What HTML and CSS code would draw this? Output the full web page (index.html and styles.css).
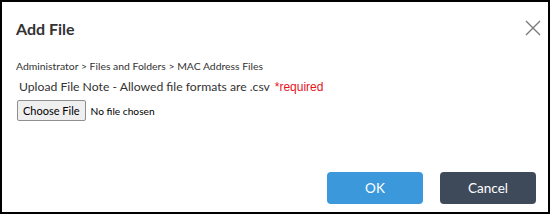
FILE: index.html
```html
<!DOCTYPE html>
<html lang="en">
<head>
  <meta charset="UTF-8">
  <title>Add File</title>
<link rel="stylesheet" href="styles.css">
</head>
<body>
<div class="modal">
  <header class="modal-header">
    <h2>Add File</h2>
    <button class="close" aria-label="Close">
      <svg width="16" height="16" viewBox="0 0 16 16"><path d="M1 1L15 15M15 1L1 15" stroke="#7a7a7a" stroke-width="1.4" fill="none"/></svg>
    </button>
  </header>
  <div class="modal-body">
    <div class="crumbs">Administrator &gt; Files and Folders &gt; MAC Address Files</div>
    <div class="note">Upload File Note - Allowed file formats are .csv <span class="req">*required</span></div>
    <div class="file-row">
      <span class="file-btn">Choose File</span>
      <span class="file-name">No file chosen</span>
    </div>
  </div>
  <footer class="modal-footer">
    <button class="btn ok">OK</button>
    <button class="btn cancel">Cancel</button>
  </footer>
</div>
</body>
</html>
```

FILE: styles.css
```css
body {
  margin: 0;
  padding: 0;
  font-family: Lato, "Open Sans", sans-serif;
  color: #333;
}
.modal {
  width: 550px;
  height: 214px;
  box-sizing: border-box;
  border: 2px solid #000;
  background: #fff;
  display: flex;
  flex-direction: column;
}
.modal-header {
  display: flex;
  align-items: center;
  justify-content: space-between;
  padding: 15px 6px 0 14px;
  height: 22px;
}
.modal-header h2 {
  margin: 0;
  font-size: 16px;
  font-weight: 700;
  color: #333;
}
.close {
  border: none;
  background: none;
  padding: 0;
  width: 18px;
  height: 18px;
  display: flex;
  align-items: center;
  justify-content: center;
}
.modal-body {
  padding: 20px 14px 0 14px;
}
.crumbs {
  font-size: 10.4px;
  line-height: 14px;
}
.note {
  margin-top: 6px;
  padding-left: 3px;
  font-size: 12.2px;
  line-height: 16px;
}
.req {
  color: #e8121e;
  font-family: "Liberation Sans", Arial, sans-serif;
  font-size: 12px;
  margin-left: 2px;
}
.file-row {
  margin-top: 5px;
  padding-left: 1px;
  display: flex;
  align-items: center;
}
.file-btn {
  display: inline-block;
  padding: 3px 5px;
  border: 1px solid #8f8f8f;
  border-radius: 2px;
  background: #efefef;
  color: #000;
  font-size: 11px;
  line-height: 13px;
}
.file-name {
  margin-left: 5px;
  font-size: 10.2px;
  color: #000;
}
.modal-footer {
  margin-top: auto;
  display: flex;
  justify-content: flex-end;
  gap: 17px;
  padding: 0 12px 8px 0;
}
.btn {
  width: 96px;
  height: 32px;
  border: none;
  border-radius: 4px;
  color: #fff;
  font-family: Lato, sans-serif;
  font-size: 13.5px;
}
.ok {
  background: #3a98db;
}
.cancel {
  background: #3e4a5a;
}
```
